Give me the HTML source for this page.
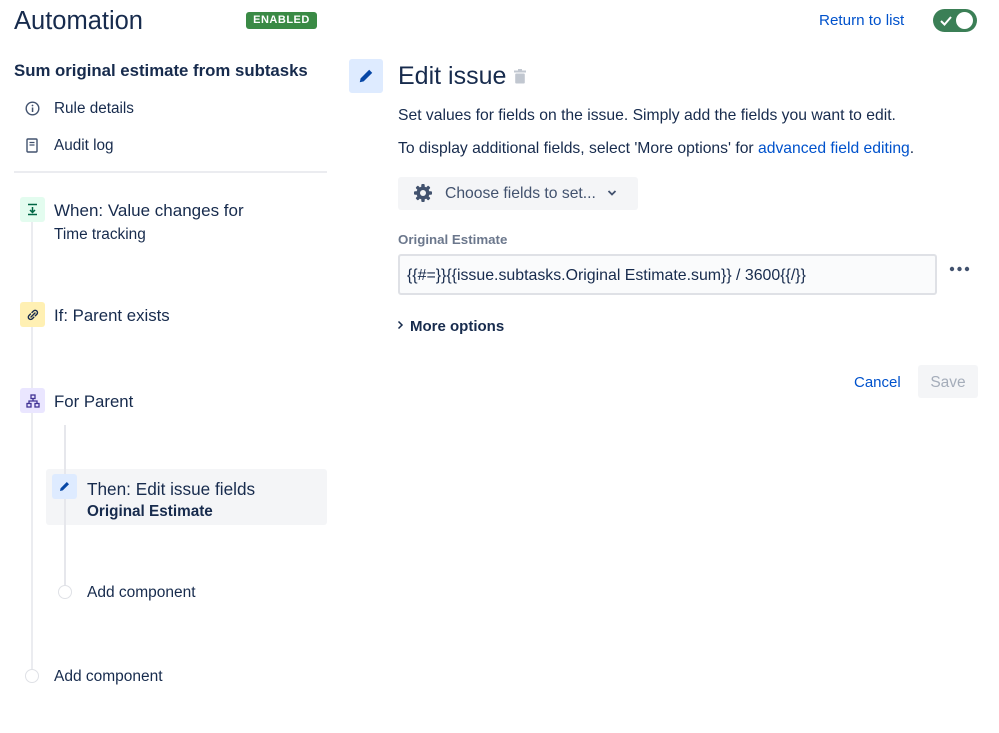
<!DOCTYPE html>
<html><head><meta charset="utf-8"><style>
*{margin:0;padding:0;box-sizing:border-box}
body{width:999px;height:733px;background:#fff;font-family:"Liberation Sans",Arial,sans-serif;color:#172B4D;position:relative;overflow:hidden}
.a{position:absolute;white-space:nowrap}
.t{line-height:20px}
.ib{position:absolute;width:25px;height:25px;border-radius:3px;display:flex;align-items:center;justify-content:center}
</style></head><body>
<div class="a" style="left:14px;top:6px;font-size:25.5px;line-height:30px">Automation</div>
<div class="a" style="left:246px;top:12px;width:71px;height:17px;background:#3a8a45;border-radius:3px;color:#fff;font-size:11px;font-weight:bold;text-align:center;line-height:17px;letter-spacing:.5px">ENABLED</div>
<div class="a t" style="left:819px;top:11px;font-size:15.2px;color:#0052CC">Return to list</div>
<div class="a" style="left:933px;top:9px;width:44px;height:23px;border-radius:12px;background:#3b7f56">
 <svg class="a" style="left:7px;top:6px" width="12" height="11" viewBox="0 0 12 11"><path d="M1 6l3.5 3.5L11 2" stroke="#fff" stroke-width="2" fill="none"/></svg>
 <div class="a" style="left:23px;top:3px;width:17px;height:17px;border-radius:50%;background:#fff"></div>
</div>
<div class="a t" style="left:14px;top:61px;font-size:16.8px;font-weight:bold">Sum original estimate from subtasks</div>
<svg class="a" style="left:25px;top:101px" width="15" height="15" viewBox="0 0 15 15"><circle cx="7.5" cy="7.5" r="6.3" stroke="#42526E" stroke-width="1.4" fill="none"/><rect x="6.8" y="6.5" width="1.5" height="4.5" fill="#42526E"/><circle cx="7.5" cy="4.5" r=".9" fill="#42526E"/></svg>
<div class="a t" style="left:54px;top:99px;font-size:15.3px">Rule details</div>
<svg class="a" style="left:26px;top:138px" width="12" height="15" viewBox="0 0 12 15"><rect x="1" y="1" width="10" height="13" rx="1" stroke="#42526E" stroke-width="1.4" fill="none"/><path d="M3.5 4.5h5M3.5 7h5" stroke="#42526E" stroke-width="1.3"/></svg>
<div class="a t" style="left:54px;top:136px;font-size:15.3px">Audit log</div>
<div class="a" style="left:14px;top:171px;width:313px;height:2px;background:#ebecf0"></div>
<div class="a" style="left:31px;top:222px;width:2px;height:454px;background:#ebecf0"></div>
<div class="ib" style="left:20px;top:197px;background:#E3FCEF"><svg width="13" height="13" viewBox="0 0 13 13"><path d="M2 1.5h9M2 11.5h9M6.5 4v5M4 7l2.5 2.5L9 7" stroke="#006644" stroke-width="1.5" fill="none"/></svg></div>
<div class="a t" style="left:54px;top:201px;font-size:17px">When: Value changes for</div>
<div class="a t" style="left:54px;top:225px;font-size:15.4px">Time tracking</div>
<div class="ib" style="left:20px;top:302px;background:#FFF0B3"><svg width="14" height="14" viewBox="0 0 14 14"><path d="M6 4.5l1.5-1.5a2.3 2.3 0 013.3 3.3L9.3 7.8M7.8 9.3L6.3 10.8A2.3 2.3 0 013 7.5L4.5 6M5 9l4-4" stroke="#172B4D" stroke-width="1.4" fill="none" stroke-linecap="round"/></svg></div>
<div class="a t" style="left:54px;top:306px;font-size:16.8px">If: Parent exists</div>
<div class="ib" style="left:20px;top:388px;background:#EAE6FF"><svg width="14" height="14" viewBox="0 0 14 14"><rect x="5" y="1" width="4" height="3.5" fill="none" stroke="#403294" stroke-width="1.3"/><rect x="1" y="9.5" width="4" height="3.5" fill="none" stroke="#403294" stroke-width="1.3"/><rect x="9" y="9.5" width="4" height="3.5" fill="none" stroke="#403294" stroke-width="1.3"/><path d="M7 4.5v2.5M3 9.5V7h8v2.5" stroke="#403294" stroke-width="1.3" fill="none"/></svg></div>
<div class="a t" style="left:54px;top:392px;font-size:16.8px">For Parent</div>
<div class="a" style="left:46px;top:469px;width:281px;height:56px;background:#f4f5f7;border-radius:3px"></div>
<div class="a" style="left:64px;top:425px;width:2px;height:167px;background:#e6e7ec"></div>
<div class="ib" style="left:52px;top:474px;background:#DEEBFF"><svg width="13" height="13" viewBox="0 0 13 13"><path d="M2 11l.6-2.8L8.8 2l2.2 2.2-6.2 6.2z" fill="#0747A6"/></svg></div>
<div class="a t" style="left:87px;top:479px;font-size:17.2px">Then: Edit issue fields</div>
<div class="a t" style="left:87px;top:502px;font-size:15.3px;font-weight:bold">Original Estimate</div>
<div class="a" style="left:58px;top:585px;width:14px;height:14px;border-radius:50%;border:1.5px solid #dfe1e6;background:#fff"></div>
<div class="a t" style="left:87px;top:583px;font-size:15.5px">Add component</div>
<div class="a" style="left:25px;top:669px;width:14px;height:14px;border-radius:50%;border:1.5px solid #dfe1e6;background:#fff"></div>
<div class="a t" style="left:54px;top:667px;font-size:15.5px">Add component</div>

<div class="a" style="left:349px;top:59px;width:34px;height:34px;background:#DEEBFF;border-radius:3px"><svg class="a" style="left:8px;top:8px" width="18" height="18" viewBox="0 0 13 13"><path d="M2 11l.6-2.8L8.8 2l2.2 2.2-6.2 6.2z" fill="#0747A6"/></svg></div>
<div class="a" style="left:398px;top:60px;font-size:25px;line-height:32px">Edit issue</div>
<svg class="a" style="left:514px;top:69px" width="12" height="15" viewBox="0 0 12 15"><rect x="0" y="1.5" width="12" height="2" fill="#c1c7d0"/><rect x="4" y="0" width="4" height="2" fill="#c1c7d0"/><rect x="1.2" y="4.5" width="9.6" height="10" rx="1" fill="#c1c7d0"/></svg>
<div class="a t" style="left:398px;top:106px;font-size:15.7px">Set values for fields on the issue. Simply add the fields you want to edit.</div>
<div class="a t" style="left:398px;top:139px;font-size:15.7px">To display additional fields, select 'More options' for <span style="color:#0052CC">advanced field editing</span>.</div>
<div class="a" style="left:398px;top:177px;width:240px;height:33px;background:#f4f5f7;border-radius:3px"></div>
<svg class="a" style="left:413px;top:183px" width="20" height="20" viewBox="0 0 20 20"><g fill="#42526E"><circle cx="10" cy="10" r="6.5"/><rect x="8.3" y="1" width="3.4" height="18" rx="1"/><rect x="8.3" y="1" width="3.4" height="18" rx="1" transform="rotate(45 10 10)"/><rect x="8.3" y="1" width="3.4" height="18" rx="1" transform="rotate(90 10 10)"/><rect x="8.3" y="1" width="3.4" height="18" rx="1" transform="rotate(135 10 10)"/></g><circle cx="10" cy="10" r="3" fill="#f4f5f7"/></svg>
<div class="a t" style="left:445px;top:184px;font-size:15.7px;color:#42526E">Choose fields to set...</div>
<svg class="a" style="left:607px;top:189px" width="10" height="8" viewBox="0 0 10 8"><path d="M1.5 2l3.5 3.5L8.5 2" stroke="#42526E" stroke-width="1.8" fill="none"/></svg>
<div class="a t" style="left:398px;top:230px;font-size:13.3px;font-weight:bold;color:#6B778C">Original Estimate</div>
<div class="a" style="left:398px;top:254px;width:539px;height:41px;background:#FAFBFC;border:2px solid #DFE1E6;border-radius:3px"></div>
<div class="a t" style="left:407px;top:266px;font-size:15.9px">{{#=}}{{issue.subtasks.Original Estimate.sum}} / 3600{{/}}</div>
<svg class="a" style="left:949px;top:266px" width="21" height="6"><circle cx="3" cy="3" r="2.2" fill="#42526E"/><circle cx="10.5" cy="3" r="2.2" fill="#42526E"/><circle cx="18" cy="3" r="2.2" fill="#42526E"/></svg>
<svg class="a" style="left:397px;top:320px" width="7" height="10"><path d="M1.5 1.5L5 5 1.5 8.5" stroke="#172B4D" stroke-width="1.5" fill="none"/></svg>
<div class="a t" style="left:410px;top:317px;font-size:15px;font-weight:bold">More options</div>
<div class="a t" style="left:854px;top:373px;font-size:15px;color:#0052CC">Cancel</div>
<div class="a" style="left:918px;top:365px;width:60px;height:33px;background:#f4f5f7;border-radius:3px;color:#a5adba;font-size:15.5px;text-align:center;line-height:35px">Save</div>
</body></html>
